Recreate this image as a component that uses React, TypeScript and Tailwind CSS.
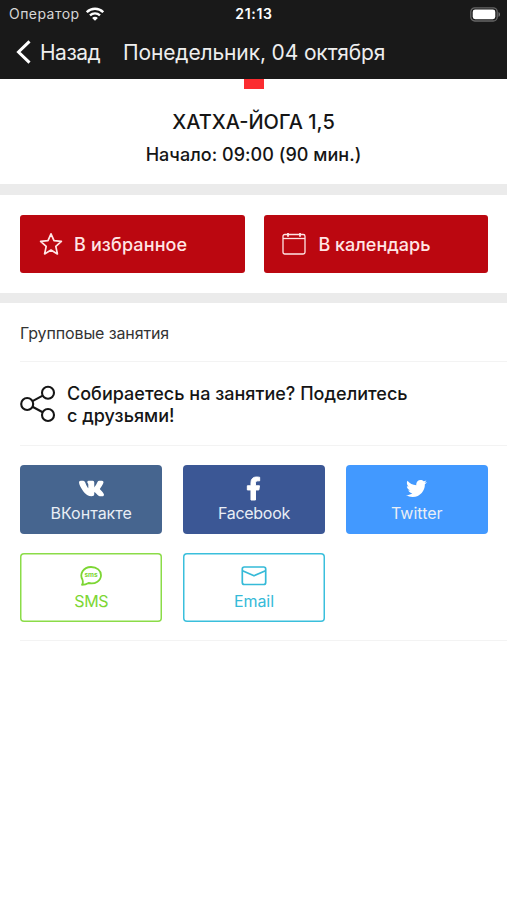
import React from "react";
import { FaFacebookF, FaTwitter, FaVk } from "react-icons/fa";

function StatusBar() {
  return (
    <div className="grid h-7 grid-cols-3 items-center pl-[9px] pr-[6px]">
      <div className="flex items-center gap-[6px]">
        <span className="text-[14px] leading-none tracking-[0.45px] text-[#d6d6d6]">Оператор</span>
        <svg width="18" height="14" viewBox="0 0 18 14" fill="none" stroke="#fff" strokeWidth="2.3">
          <path d="M.8 5.200C5.400.6 12.600.6 17.200 5.200" />
          <path d="M4 8.400c2.900-2.800 7.100-2.800 10 0" />
          <path d="M9 13.800 6.100 10.900c1.600-1.500 4.200-1.500 5.800 0Z" fill="#fff" stroke="none" />
        </svg>
      </div>
      <span className="-ml-[2px] text-center text-[14px] font-semibold leading-none tracking-[0.7px]">21:13</span>
      <svg className="justify-self-end" width="31" height="15" viewBox="0 0 31 15">
        <rect x="0.8" y="0.8" width="26.4" height="13.2" rx="4" fill="none" stroke="#666" strokeWidth="1.3" />
        <rect x="2.7" y="2.6" width="22.6" height="9.6" rx="2.4" fill="#fff" />
        <path d="M28.500 5c2 .8 2 4 0 4.800Z" fill="#777" />
      </svg>
    </div>
  );
}

function Star() {
  return (
    <svg width="24" height="24" viewBox="0 0 24 24" fill="none" stroke="currentColor" strokeWidth="1.7" strokeLinejoin="round">
      <path d="m12 1.800 3 6.900 7.400.7-5.600 5 1.600 7.500-6.400-3.800-6.400 3.800 1.600-7.500-5.600-5 7.400-.7Z" />
    </svg>
  );
}

function Calendar() {
  return (
    <svg width="24" height="24" viewBox="0 0 24 24" fill="none" stroke="currentColor" strokeWidth="1.3">
      <rect x="1" y="2.500" width="22" height="19.500" rx="1.800" />
      <path d="M1 6.500h22" />
      <path d="M6 1v3.800M18 1v3.800" strokeWidth="1.800" />
    </svg>
  );
}

function SmsIcon() {
  return (
    <svg width="22" height="20" viewBox="0 0 22 20" fill="none" stroke="currentColor" strokeWidth="1.8" strokeLinejoin="round">
      <path d="M2.400 13.500C-.6 8.300 3 1 11 1c6 0 10 3.700 10 8.200 0 5.300-5.500 9.400-12.400 7.800-2 1.200-4 1.800-6.600 1.800 1-1.500 1.200-3.100.4-5.300Z" />
      <text x="11" y="11" textAnchor="middle" fontSize="6.500" fontWeight="700" fill="currentColor" stroke="none">sms</text>
    </svg>
  );
}

function MailIcon() {
  return (
    <svg width="26" height="20" viewBox="0 0 26 20" fill="none" stroke="currentColor" strokeWidth="1.7" strokeLinejoin="round">
      <rect x="1.300" y="1" width="23.400" height="17.500" rx="2" />
      <path d="m1.500 4.800 11.500 5 11.500-5" />
    </svg>
  );
}

function ShareButton({ icon, label, className }: { icon: React.ReactNode; label: React.ReactNode; className: string }) {
  return (
    <button className={`flex h-[69px] flex-col items-center rounded-[4px] pt-[10px] text-[16px] leading-[20px] ${className}`}>
      <span className="mb-[2px] flex h-[26px] items-center">{icon}</span>
      {label}
    </button>
  );
}

export default function App() {
  return (
    <main className="h-[900px] w-[507px] overflow-hidden bg-white font-['Inter','Liberation_Sans',sans-serif] text-[#151515]">
      <header className="h-[79px] bg-[#191919] text-white">
        <StatusBar />
        <div className="flex h-12 items-center pl-4 text-[21px] leading-none text-[#eee]">
          <svg width="15" height="24" viewBox="0 0 15 24" fill="none" stroke="#fff" strokeWidth="3">
            <path d="M13.500 1.300 2.500 12l11 10.700" />
          </svg>
          <span className="ml-[9px] w-[83px] tracking-[-0.5px]">Назад</span>
          <h1 className="whitespace-nowrap tracking-[-0.13px]">Понедельник, 04 октября</h1>
        </div>
      </header>

      <section className="flex h-[105px] flex-col items-center">
        <div className="h-[10px] w-5 bg-[#fb2c30]" />
        <h2 className="mt-[19px] text-[20px] font-medium leading-[28px]">ХАТХА-ЙОГА 1,5</h2>
        <p className="mt-[6px] pt-px text-[18px] font-medium leading-[24px] tracking-[0.04px]">Начало: 09:00 (90 мин.)</p>
      </section>
      <div className="h-[11px] bg-[#ebebeb]" />

      <section className="grid h-[98px] grid-cols-2 gap-[19px] py-[20px] pl-[20px] pr-[19px] text-[18px] font-medium text-[#ffe5e5]">
        <button className="flex items-center gap-[11px] rounded-[3px] bg-[#bb0710] pl-[19px]">
          <Star />
          <span className="tracking-[0.13px]">В избранное</span>
        </button>
        <button className="flex items-center gap-[13px] rounded-[3px] bg-[#bb0710] pl-[18px]">
          <Calendar />
          <span>В календарь</span>
        </button>
      </section>
      <div className="h-[10px] bg-[#ebebeb]" />

      <section className="pl-5">
        <p className="flex h-[59px] items-center border-b border-[#f3f3f3] pt-[2px] text-[16px] tracking-[-0.12px] text-[#333]">Групповые занятия</p>
        <div className="flex h-[84px] items-center border-b border-[#f3f3f3]">
          <svg width="36" height="38" viewBox="0 0 36 38" fill="none" stroke="#151515" strokeWidth="2.1">
            <circle cx="7.200" cy="19" r="6" />
            <circle cx="28" cy="7.700" r="6" />
            <circle cx="28" cy="30" r="6" />
            <path d="m12.500 16.200 10.200-5.500M12.500 21.800l10.200 5.400" />
          </svg>
          <p className="ml-[11px] pt-[2px] text-[18px] font-medium leading-[21.500px] tracking-[0.02px]">
            <span className="block whitespace-nowrap">Собираетесь на занятие? Поделитесь</span>
            <span className="block">с друзьями!</span>
          </p>
        </div>
        <div className="grid h-[195px] grid-cols-3 content-start gap-x-[20.500px] gap-y-[19px] border-b border-[#f3f3f3] pr-[19px] pt-[19px]">
          <ShareButton icon={<FaVk size={25} color="#fff" stroke="#fff" strokeWidth={36} overflow="visible" />} label={<span>ВКонтакте</span>} className="bg-[#46658f] text-[#e9eef5]" />
          <ShareButton icon={<FaFacebookF size={23} color="#fff" stroke="#fff" strokeWidth={22} overflow="visible" />} label={<span className="tracking-[-0.3px]">Facebook</span>} className="bg-[#3b5795] text-[#e9eef5]" />
          <ShareButton icon={<FaTwitter size={21} color="#fff" />} label={<span>Twitter</span>} className="bg-[#4299ff] text-[#e9eef5]" />
          <ShareButton icon={<SmsIcon />} label={<span className="tracking-[-0.4px]">SMS</span>} className="text-[#7cd633] shadow-[inset_0_0_0_1.5px_#8bdc48]" />
          <ShareButton icon={<MailIcon />} label={<span className="tracking-[-0.1px]">Email</span>} className="text-[#35bad8] shadow-[inset_0_0_0_1.5px_#3abfdc]" />
        </div>
      </section>
    </main>
  );
}
